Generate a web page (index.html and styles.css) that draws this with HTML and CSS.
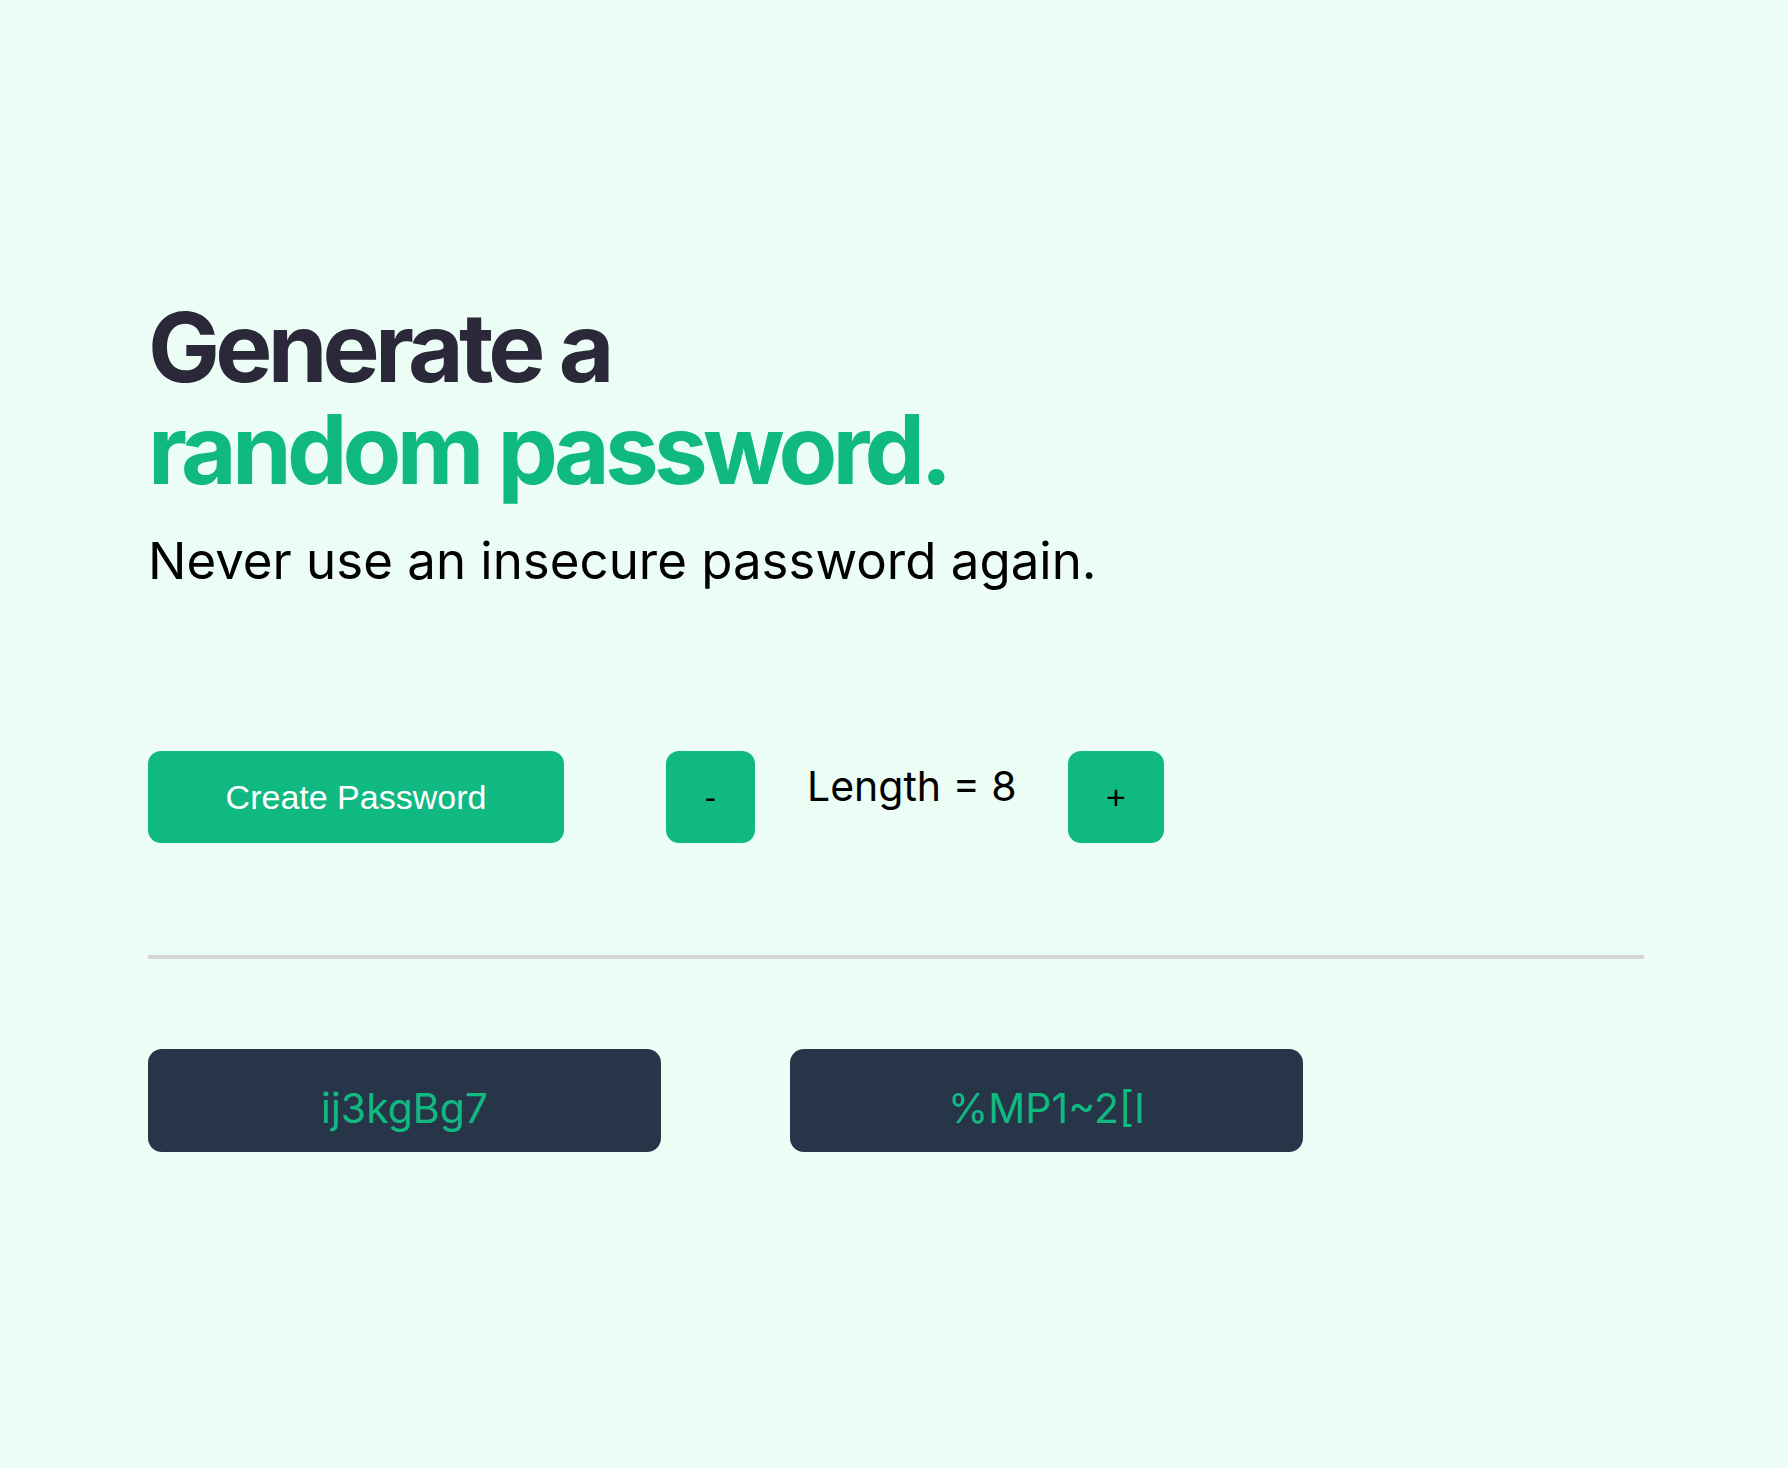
FILE: index.html
```html
<!DOCTYPE html>
<html lang="en">
<head>
<meta charset="utf-8">
<title>Password Generator</title>
<link rel="stylesheet" href="styles.css">
</head>
<body>
<main class="page">
  <h1 class="title"><span class="line">Generate a</span><span class="line accent">random password.</span></h1>
  <p class="subtitle">Never use an insecure password again.</p>
  <div class="controls">
    <button class="btn btn-create">Create Password</button>
    <button class="btn btn-small btn-minus">-</button>
    <p class="length">Length = 8</p>
    <button class="btn btn-small btn-plus">+</button>
  </div>
  <hr class="divider">
  <div class="results">
    <div class="pw">ij3kgBg7</div>
    <div class="pw">%MP1~2[I</div>
  </div>
</main>
</body>
</html>
```
FILE: styles.css
```css
html, body {
  margin: 0;
  padding: 0;
  background: #ecfdf5;
}
body {
  font-family: Inter, "Noto Sans", sans-serif;
  color: #000;
}
.page {
  padding: 296px 0 0 148px;
  width: 1496px;
}
.title {
  margin: 0;
  font-family: Inter, sans-serif;
  font-weight: 700;
  font-size: 96px;
  line-height: 102px;
  letter-spacing: -0.05em;
  color: #2b283a;
}
.line {
  display: block;
  height: 102px;
}
.accent {
  color: #10b981;
}
.subtitle {
  margin: 30px 0 0;
  font-size: 51px;
  line-height: 62px;
  font-weight: 400;
  color: #000;
}
.controls {
  margin-top: 159px;
  display: flex;
  align-items: flex-start;
  height: 92px;
}
.btn {
  height: 92px;
  border: none;
  border-radius: 13px;
  background: #10b981;
  font-family: "Liberation Sans", Arial, sans-serif;
  font-size: 34px;
  padding: 0;
  cursor: pointer;
}
.btn-create {
  width: 416px;
  color: #ffffff;
}
.btn-small {
  color: #000;
}
.btn-minus {
  width: 89px;
  margin-left: 102px;
}
.btn-plus {
  width: 96px;
  margin-left: 55px;
}
.length {
  margin: 10px 0 0 52px;
  font-size: 41px;
  line-height: 50px;
  width: 206px;
  white-space: nowrap;
}
.divider {
  margin: 112px 0 0;
  border: none;
  height: 4px;
  background: #d5d4d8;
}
.results {
  margin-top: 90px;
  display: flex;
  gap: 129px;
}
.pw {
  width: 513px;
  height: 103px;
  box-sizing: border-box;
  padding-top: 34px;
  border-radius: 14px;
  background: #273549;
  color: #10b981;
  font-size: 41px;
  line-height: 50px;
  text-align: center;
}
```
